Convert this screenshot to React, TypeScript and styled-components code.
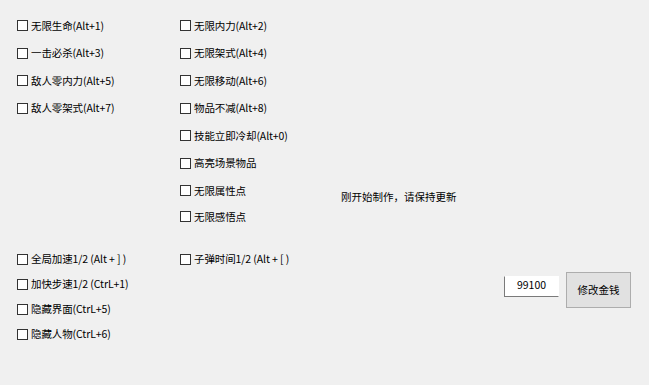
import React from 'react';
import styled, { createGlobalStyle } from 'styled-components';

const GlobalStyle = createGlobalStyle`
	html, body {
		margin: 0;
		padding: 0;
		background: #f0f0f0;
	}
	body {
		font-family: 'Noto Sans CJK SC', 'Noto Sans', sans-serif;
		color: #000;
	}
`;

type Option = { label: string; height?: number };

const topLeft: Option[] = [
	{ label: '无限生命(Alt+1)' },
	{ label: '一击必杀(Alt+3)' },
	{ label: '敌人零内力(Alt+5)' },
	{ label: '敌人零架式(Alt+7)' }
];

const topRight: Option[] = [
	{ label: '无限内力(Alt+2)' },
	{ label: '无限架式(Alt+4)' },
	{ label: '无限移动(Alt+6)' },
	{ label: '物品不减(Alt+8)' },
	{ label: '技能立即冷却(Alt+0)' },
	{ label: '高亮场景物品' },
	{ label: '无限属性点' },
	{ label: '无限感悟点', height: 24 }
];

const bottomLeft: Option[] = [
	{ label: '全局加速1/2 (Alt + ] )' },
	{ label: '加快步速1/2 (CtrL+1)' },
	{ label: '隐藏界面(CtrL+5)' },
	{ label: '隐藏人物(CtrL+6)' }
];

const bottomRight: Option[] = [{ label: '子弹时间1/2 (Alt + [ )' }];

const CheckList: React.FC<{ items: Option[]; rowHeight: number }> = ({ items, rowHeight }) => (
	<Column>
		{items.map((item) => (
			<CheckRow key={item.label} $height={item.height ?? rowHeight}>
				<Box type="checkbox" />
				<span>{item.label}</span>
			</CheckRow>
		))}
	</Column>
);

const App: React.FC = () => {
	return (
		<Window>
			<GlobalStyle />
			<TopSection>
				<CheckList items={topLeft} rowHeight={27.5} />
				<CheckList items={topRight} rowHeight={27.5} />
				<Notice>刚开始制作，请保持更新</Notice>
			</TopSection>
			<BottomSection>
				<CheckList items={bottomLeft} rowHeight={25} />
				<CheckList items={bottomRight} rowHeight={25} />
				<MoneyBox>
					<MoneyInput defaultValue="99100" />
					<MoneyButton>修改金钱</MoneyButton>
				</MoneyBox>
			</BottomSection>
		</Window>
	);
};

const Window = styled.div`
	width: 649px;
	height: 385px;
	box-sizing: border-box;
	padding: 12px 0 0 17px;
	background: #f0f0f0;
	overflow: hidden;
	font-size: 10.5px;
`;

const TopSection = styled.div`
	display: grid;
	grid-template-columns: 163px 161px 1fr;
	align-items: start;
`;

const BottomSection = styled.div`
	display: grid;
	grid-template-columns: 163px 324px auto;
	align-items: start;
	margin-top: 18px;
`;

const Column = styled.div`
	display: flex;
	flex-direction: column;
`;

const CheckRow = styled.label<{ $height: number }>`
	display: flex;
	align-items: center;
	gap: 3px;
	height: ${({ $height }) => $height}px;
	line-height: 14px;
	white-space: nowrap;
	letter-spacing: -0.1px;
`;

const Box = styled.input`
	appearance: none;
	margin: 0;
	width: 11px;
	height: 11px;
	box-sizing: border-box;
	border: 1px solid #333;
	background: #fff;
	flex-shrink: 0;
`;

const Notice = styled.div`
	margin-top: 178px;
	line-height: 14px;
	white-space: nowrap;
`;

const MoneyBox = styled.div`
	display: flex;
	align-items: flex-start;
	gap: 7px;
	margin-top: 25px;
`;

const MoneyInput = styled.input`
	width: 55px;
	height: 21px;
	margin-top: 4px;
	box-sizing: border-box;
	border: 1px solid #7a7a7a;
	border-top-color: #fff;
	border-right-color: #fff;
	background: #fff;
	font: inherit;
	font-size: 10.5px;
	text-align: center;
	padding: 0 0 3px;
	outline: none;
`;

const MoneyButton = styled.button`
	width: 65px;
	height: 36px;
	box-sizing: border-box;
	border: 1px solid #adadad;
	background: #e1e1e1;
	font: inherit;
	font-size: 10.5px;
	color: #000;
	padding: 0;
`;

export default App;
